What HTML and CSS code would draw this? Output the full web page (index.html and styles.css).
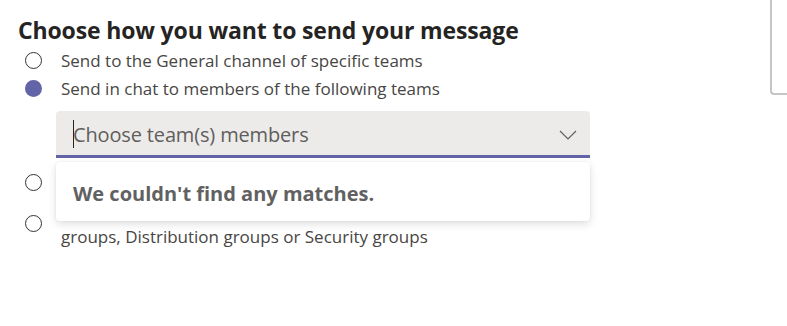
FILE: index.html
```html
<!DOCTYPE html>
<html>
<head>
<meta charset="utf-8">
<link rel="stylesheet" href="styles.css">
</head>
<body>
<div class="page">
  <div class="content">
    <h1 class="title">Choose how you want to send your message</h1>
    <div class="options">
      <label class="option">
        <span class="radio"></span>
        <span class="label">Send to the General channel of specific teams</span>
      </label>
      <label class="option">
        <span class="radio checked"></span>
        <span class="label">Send in chat to members of the following teams</span>
      </label>
      <div class="picker">
        <div class="combo">
          <span class="caret"></span>
          <span class="placeholder">Choose team(s) members</span>
          <svg class="chevron" width="18" height="10" viewBox="0 0 18 10"><path d="M1 1 L9 9 L17 1" fill="none" stroke="#616161" stroke-width="1.2"/></svg>
        </div>
        <div class="popup">We couldn't find any matches.</div>
      </div>
      <label class="option third">
        <span class="radio"></span>
        <span class="label">Send in chat to everyone</span>
      </label>
      <label class="option fourth">
        <span class="radio"></span>
        <span class="label">Send in chat to members of M365<br>groups, Distribution groups or Security groups</span>
      </label>
    </div>
  </div>
  <div class="side-box"></div>
</div>
</body>
</html>
```

FILE: styles.css
```css
html, body {
  margin: 0;
  padding: 0;
  background: #ffffff;
}
body {
  font-family: "Open Sans", "Noto Sans", sans-serif;
  color: #484644;
  width: 787px;
  height: 326px;
  overflow: hidden;
}
.page {
  display: flex;
  justify-content: space-between;
  align-items: flex-start;
}
.content {
  padding: 16px 0 0 18px;
}
.title {
  margin: 0 0 2px 0;
  font-size: 23px;
  line-height: 28px;
  font-weight: 700;
  color: #252423;
  letter-spacing: -0.15px;
}
.options {
  display: flex;
  flex-direction: column;
}
.option {
  display: flex;
  align-items: center;
  height: 28px;
  font-size: 17px;
  color: #484644;
}
.radio {
  box-sizing: border-box;
  width: 17px;
  height: 17px;
  border-radius: 50%;
  border: 1.5px solid #333333;
  margin: 0 19px 0 7px;
  flex: none;
}
.radio.checked {
  border: none;
  background: #6264a7;
}
.picker {
  position: relative;
  margin: 9px 0 0 38px;
  width: 534px;
}
.combo {
  box-sizing: border-box;
  height: 47px;
  background: #edebe9;
  border-radius: 4px 4px 0 0;
  border-bottom: 3px solid #6264a7;
  display: flex;
  align-items: center;
  padding: 3px 13px 0 17px;
  position: relative;
}
.caret {
  width: 1px;
  height: 28px;
  background: #252423;
  position: absolute;
  left: 17px;
  top: 9px;
}
.placeholder {
  flex: 1;
  font-size: 20px;
  color: #605e5c;
  letter-spacing: -0.15px;
}
.popup {
  position: absolute;
  left: 0;
  right: 0;
  top: 51px;
  height: 59px;
  background: #ffffff;
  border-radius: 4px;
  box-shadow: 0 3px 8px rgba(0, 0, 0, 0.13), 0 0 2px rgba(0, 0, 0, 0.08);
  box-sizing: border-box;
  padding: 3px 0 0 17px;
  display: flex;
  align-items: center;
  font-size: 20px;
  font-weight: 700;
  color: #616161;
  z-index: 2;
}
.option.third {
  margin-top: 10px;
}
.option.fourth {
  margin-top: 5px;
  height: auto;
  align-items: flex-start;
  line-height: 24px;
}
.option.fourth .radio {
  margin-top: 14px;
}
.side-box {
  box-sizing: border-box;
  width: 17px;
  height: 95px;
  border-left: 2px solid #c8c6c4;
  border-bottom: 2px solid #c8c6c4;
  border-bottom-left-radius: 4px;
  flex: none;
}
```
